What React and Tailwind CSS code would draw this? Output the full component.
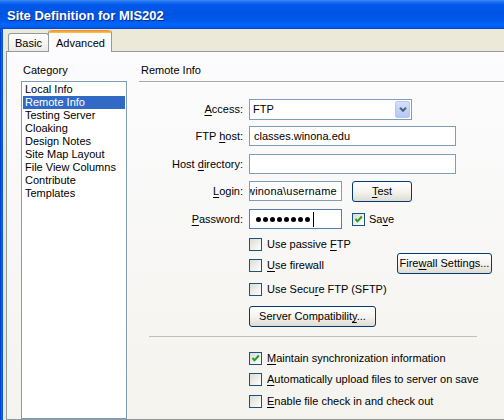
import React from "react";

const categories = [
  "Local Info",
  "Remote Info",
  "Testing Server",
  "Cloaking",
  "Design Notes",
  "Site Map Layout",
  "File View Columns",
  "Contribute",
  "Templates"
];

const Key = ({ children }) => <span className="underline underline-offset-[2px]">{children}</span>;

const CheckBox = ({ checked }) => (
  <span className="flex h-[13px] w-[13px] shrink-0 items-center justify-center border border-[#1c5180] bg-linear-to-br from-[#dcdbd5] to-white">
    {checked && (
      <svg width="9" height="9" viewBox="0 0 9 9">
        <path d="M1.5 4 L3.5 6.3 L7.8 1.5" fill="none" stroke="#21a121" strokeWidth="2" />
      </svg>
    )}
  </span>
);

const XpButton = ({ className, children }) => (
  <div
    className={`flex h-[21px] shrink-0 items-center justify-center rounded-[3px] border border-[#003c74] bg-linear-to-b from-white via-[#f5f4ef] to-[#dedcd2] ${className}`}
  >
    {children}
  </div>
);

const CheckRow = ({ checked, className, children }) => (
  <div className={`flex h-[13px] items-center ${className}`}>
    <CheckBox checked={checked} />
    <span className="ml-[5px] whitespace-nowrap">{children}</span>
  </div>
);

const FieldRow = ({ label, className, children }) => (
  <div className={`flex items-center ${className}`}>
    <span className="w-[104px] shrink-0 text-right">{label}</span>
    <div className="ml-[6px] flex items-center">{children}</div>
  </div>
);

export default function App() {
  return (
    <div className="h-[420px] w-[504px] overflow-hidden bg-[#ece9d8] font-['Liberation_Sans',Arial,sans-serif] text-[11px] leading-[13px] text-black">
      <div className="flex h-[420px] w-[520px] flex-col">
        {/* title bar */}
        <div className="flex h-[29px] shrink-0 items-center pl-[7px] pt-[2px] bg-[linear-gradient(to_bottom,#3d8ef7_0px,#1a6ef0_2px,#0058ea_5px,#0054e3_14px,#0058ea_20px,#0066fb_24px,#0060f4_27px,#0042c8_29px)]">
          <span className="text-[13px] font-bold text-white [text-shadow:1px_1px_0_#0a2c8f]">
            Site Definition for MIS202
          </span>
        </div>

        <div className="flex min-h-0 flex-1">
          <div className="w-[3px] shrink-0 bg-[linear-gradient(to_right,#0036b8,#0862ee,#0055e5)]" />
          <div className="flex flex-1 flex-col pl-[3px]">
            {/* tabs */}
            <div className="flex h-[22px] shrink-0 items-end pl-[2px]">
              <div className="flex h-[18px] w-[41px] items-center rounded-t-[3px] border border-b-0 border-[#919b9c] bg-linear-to-b from-white to-[#ecebe6] pl-[6px] pt-[1px]">
                Basic
              </div>
              <div className="relative z-10 -mb-px -ml-px flex h-[22px] w-[64px] flex-col rounded-t-[3px] border-x border-[#919b9c] bg-[#fcfcfe]">
                <div className="h-[3px] rounded-t-[3px] bg-linear-to-b from-[#e68b2c] to-[#ffc73c]" />
                <div className="pl-[7px] pt-[4px]">Advanced</div>
              </div>
            </div>

            {/* panel */}
            <div className="flex flex-1 border border-[#919b9c] bg-linear-to-b from-[#fcfcfe] to-[#f4f3ee] pl-[14px] pt-[12px]">
              {/* category list */}
              <div className="flex w-[106px] shrink-0 flex-col">
                <div className="pl-[2px]">Category</div>
                <div className="mt-[4px] flex-1 border border-[#7f9db9] bg-white px-px pt-px">
                  {categories.map((c) => (
                    <div
                      key={c}
                      className={`h-[13px] pl-[2px] whitespace-nowrap ${c === "Remote Info" ? "bg-[#316ac5] text-white" : ""}`}
                    >
                      {c}
                    </div>
                  ))}
                </div>
              </div>

              {/* remote info */}
              <div className="ml-[12px] flex flex-1 flex-col">
                <div className="pl-[2px]">Remote Info</div>
                <div className="mt-[4px] h-px bg-[#a7a6a0]" />
                <div className="h-px bg-white" />

                <FieldRow
                  className="mt-[16px] h-[21px]"
                  label={
                    <>
                      <Key>A</Key>ccess:
                    </>
                  }
                >
                  <div className="flex h-[21px] w-[163px] items-center border border-[#7f9db9] bg-white pl-[3px] pr-px">
                    <span className="flex-1">FTP</span>
                    <span className="flex h-[17px] w-[15px] items-center justify-center rounded-[2px] border border-[#b6c8f2] bg-linear-to-b from-[#d4e0fb] to-[#b3c6f5]">
                      <svg width="8" height="5" viewBox="0 0 8 5">
                        <path d="M1 0.8 L4 3.8 L7 0.8" fill="none" stroke="#4d6185" strokeWidth="2" />
                      </svg>
                    </span>
                  </div>
                </FieldRow>

                <FieldRow
                  className="mt-[6px] h-[20px]"
                  label={
                    <>
                      FTP <Key>h</Key>ost:
                    </>
                  }
                >
                  <div className="flex h-[20px] w-[207px] items-center border border-[#7f9db9] bg-white pl-[4px]">
                    classes.winona.edu
                  </div>
                </FieldRow>

                <FieldRow
                  className="mt-[8px] h-[20px]"
                  label={
                    <>
                      Host <Key>d</Key>irectory:
                    </>
                  }
                >
                  <div className="h-[20px] w-[207px] border border-[#7f9db9] bg-white" />
                </FieldRow>

                <FieldRow
                  className="mt-[7px] h-[20px]"
                  label={
                    <>
                      <Key>L</Key>ogin:
                    </>
                  }
                >
                  <div className="flex h-[20px] w-[93px] items-center overflow-hidden border border-[#7f9db9] bg-white">
                    <span className="-ml-[3px] whitespace-nowrap tracking-[0.2px]">winona\username</span>
                  </div>
                  <XpButton className="ml-[10px] w-[60px]">
                    <span>
                      <Key>T</Key>est
                    </span>
                  </XpButton>
                </FieldRow>

                <FieldRow
                  className="mt-[8px] h-[20px]"
                  label={
                    <>
                      <Key>P</Key>assword:
                    </>
                  }
                >
                  <div className="flex h-[20px] w-[93px] items-center gap-[2px] border border-[#5a7ca4] bg-white pl-[6px]">
                    {[0, 1, 2, 3, 4, 5, 6, 7].map((i) => (
                      <span key={i} className="h-[5px] w-[5px] rounded-full bg-black" />
                    ))}
                    <span className="ml-[1px] h-[15px] w-px bg-black" />
                  </div>
                  <div className="ml-[10px] flex items-center">
                    <CheckBox checked />
                    <span className="ml-[4px]">
                      Sa<Key>v</Key>e
                    </span>
                  </div>
                </FieldRow>

                <div className="flex flex-col pl-[110px]">
                  <CheckRow className="mt-[9px]">
                    Use passive <Key>F</Key>TP
                  </CheckRow>
                  <div className="mt-[8px] flex h-[13px] items-start">
                    <div className="flex w-[148px] items-center">
                      <CheckBox />
                      <span className="ml-[5px]">
                        <Key>U</Key>se firewall
                      </span>
                    </div>
                    <XpButton className="-mt-[6px] w-[95px]">
                      <span>
                        Fire<Key>w</Key>all Settings...
                      </span>
                    </XpButton>
                  </div>
                  <CheckRow className="mt-[11px]">
                    Use Secu<Key>r</Key>e FTP (SFTP)
                  </CheckRow>
                  <XpButton className="mt-[10px] w-[127px]">
                    <span>
                      Server Compatibilit<Key>y</Key>...
                    </span>
                  </XpButton>
                </div>

                <div className="ml-[10px] mt-[9px] h-px w-[328px] bg-[#c0beb6]" />

                <div className="flex flex-col pl-[110px]">
                  <CheckRow checked className="mt-[15px]">
                    <Key>M</Key>aintain synchronization information
                  </CheckRow>
                  <CheckRow className="mt-[8px]">
                    <Key>A</Key>utomatically upload files to server on save
                  </CheckRow>
                  <CheckRow className="mt-[9px]">
                    <Key>E</Key>nable file check in and check out
                  </CheckRow>
                </div>
              </div>
            </div>
          </div>
        </div>
      </div>
    </div>
  );
}
